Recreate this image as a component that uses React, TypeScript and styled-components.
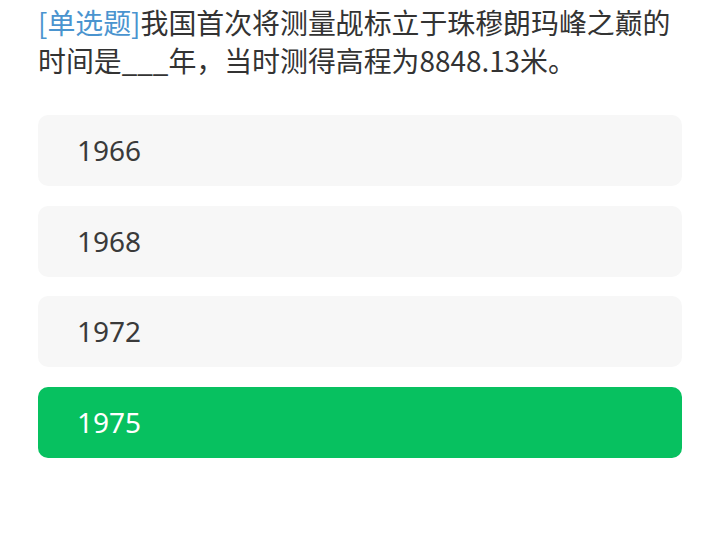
import * as React from 'react'
import styled, { createGlobalStyle } from 'styled-components'

const GlobalStyle = createGlobalStyle`
  html, body {
    margin: 0;
    padding: 0;
    background: #ffffff;
  }
  body {
    font-family: "Noto Sans", "Noto Sans CJK SC", sans-serif;
  }
`

const Page = styled.div`
  padding: 3px 38px 0 38px;
`

const Question = styled.div`
  font-size: 27.9px;
  line-height: 38px;
  color: #333333;
  font-family: "Noto Sans CJK SC", sans-serif;
`

const Tag = styled.span`
  color: #4a94cf;
`

const Options = styled.div`
  display: flex;
  flex-direction: column;
  gap: 19.7px;
  margin-top: 36px;
`

const Option = styled.div<{ $selected?: boolean }>`
  height: 71px;
  border-radius: 10px;
  display: flex;
  align-items: center;
  padding-left: 39px;
  padding-bottom: 1px;
  box-sizing: border-box;
  font-size: 28px;
  font-family: "Noto Sans", sans-serif;
  background: ${({ $selected }) => ($selected ? '#07c160' : '#f7f7f7')};
  color: ${({ $selected }) => ($selected ? '#ffffff' : '#3a3a3a')};
`

const choices = ['1966', '1968', '1972', '1975']

export default function App() {
  const selected = '1975'
  return (
    <Page>
      <GlobalStyle />
      <Question>
        <Tag>[单选题]</Tag>我国首次将测量觇标立于珠穆朗玛峰之巅的时间是___年，当时测得高程为8848.13米。
      </Question>
      <Options>
        {choices.map(c => (
          <Option key={c} $selected={c === selected}>
            {c}
          </Option>
        ))}
      </Options>
    </Page>
  )
}
